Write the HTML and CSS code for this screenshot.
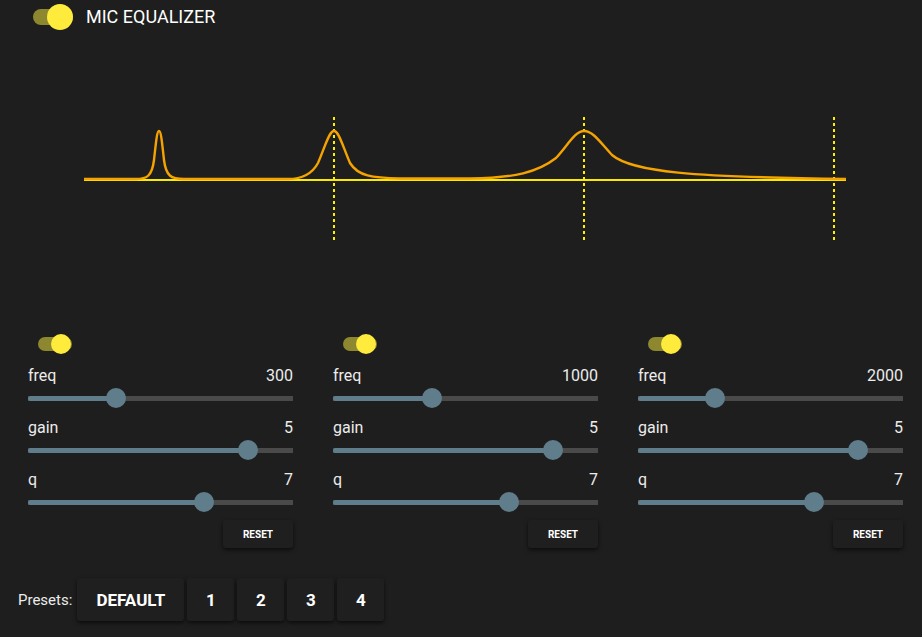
FILE: index.html
```html
<!DOCTYPE html>
<html>
    <head>
        <meta charset="UTF-8">
        <title>Mic Equalizer</title>
        <link rel="stylesheet" href="styles.css">
    </head>
    <body>
        <div class="header">
            <div class="switch big"><span class="knob"></span></div>
            <span class="title">MIC EQUALIZER</span>
        </div>

        <svg class="graph" width="922" height="280" viewBox="0 40 922 280">
            <line x1="334" y1="117" x2="334" y2="242" class="marker"/>
            <line x1="584" y1="117" x2="584" y2="242" class="marker"/>
            <line x1="834" y1="117" x2="834" y2="242" class="marker"/>
            <line x1="84" y1="180" x2="846" y2="180" class="zero"/>
            <path class="curve" d="M84 179 L136 179 C147 179, 152 176, 154 160 C156 142, 157 131, 159 131 C161 131, 162 142, 164 160 C166 176, 171 179, 184 179 L288 179 C300 179, 311 176, 318 163 C325 147, 329 131, 334 131 C339 131, 343 147, 350 163 C358 176, 372 178, 400 178.5 L470 178.5 C515 178, 538 172, 556 158 C568 145, 575 131, 584 131 C593 131, 600 142, 612 155 C632 172, 690 177, 846 179"/>
        </svg>

        <div class="bands">
            <div class="band">
                <div class="switch"><span class="knob"></span></div>
                <div class="row"><span>freq</span><span>300</span></div>
                <div class="slider"><div class="fill" style="width: 33.2%"></div><div class="thumb" style="left: 33.2%"></div></div>
                <div class="row"><span>gain</span><span>5</span></div>
                <div class="slider"><div class="fill" style="width: 83%"></div><div class="thumb" style="left: 83%"></div></div>
                <div class="row"><span>q</span><span>7</span></div>
                <div class="slider"><div class="fill" style="width: 66.4%"></div><div class="thumb" style="left: 66.4%"></div></div>
                <button class="reset">RESET</button>
            </div>
            <div class="band">
                <div class="switch"><span class="knob"></span></div>
                <div class="row"><span>freq</span><span>1000</span></div>
                <div class="slider"><div class="fill" style="width: 37.4%"></div><div class="thumb" style="left: 37.4%"></div></div>
                <div class="row"><span>gain</span><span>5</span></div>
                <div class="slider"><div class="fill" style="width: 83%"></div><div class="thumb" style="left: 83%"></div></div>
                <div class="row"><span>q</span><span>7</span></div>
                <div class="slider"><div class="fill" style="width: 66.4%"></div><div class="thumb" style="left: 66.4%"></div></div>
                <button class="reset">RESET</button>
            </div>
            <div class="band">
                <div class="switch"><span class="knob"></span></div>
                <div class="row"><span>freq</span><span>2000</span></div>
                <div class="slider"><div class="fill" style="width: 29%"></div><div class="thumb" style="left: 29%"></div></div>
                <div class="row"><span>gain</span><span>5</span></div>
                <div class="slider"><div class="fill" style="width: 83%"></div><div class="thumb" style="left: 83%"></div></div>
                <div class="row"><span>q</span><span>7</span></div>
                <div class="slider"><div class="fill" style="width: 66.4%"></div><div class="thumb" style="left: 66.4%"></div></div>
                <button class="reset">RESET</button>
            </div>
        </div>

        <div class="presets">
            <span class="presets-label">Presets:</span>
            <button class="preset wide">DEFAULT</button>
            <button class="preset">1</button>
            <button class="preset">2</button>
            <button class="preset">3</button>
            <button class="preset">4</button>
        </div>
    </body>
</html>
```

FILE: styles.css
```css
body {
    margin: 0;
    background-color: #1e1e1e;
    color: #ececec;
    font-family: Roboto, "Liberation Sans", sans-serif;
    width: 922px;
    height: 637px;
    overflow: hidden;
}
.header {
    display: flex;
    align-items: center;
    height: 33px;
    padding-left: 33px;
}
.title {
    font-size: 18px;
    color: #ffffff;
    margin-left: 13px;
}
.switch {
    position: relative;
    width: 34px;
    height: 14px;
    border-radius: 7px;
    background-color: #8d8830;
    margin-left: 10px;
    margin-top: 3px;
    margin-bottom: 3px;
}
.switch .knob {
    position: absolute;
    right: 1px;
    top: -3px;
    width: 20px;
    height: 20px;
    border-radius: 50%;
    background-color: #ffeb3b;
}
.switch.big {
    width: 40px;
    height: 16px;
    border-radius: 8px;
    margin: 0;
}
.switch.big .knob {
    width: 26px;
    height: 26px;
    right: 0;
    top: -5px;
}
.graph {
    display: block;
    margin-top: 7px;
}
.marker {
    stroke: #ffee00;
    stroke-width: 2;
    stroke-dasharray: 3 3;
}
.zero {
    stroke: #f8ea00;
    stroke-width: 2;
}
.curve {
    fill: none;
    stroke: #f5a300;
    stroke-width: 2.4;
}
.bands {
    display: grid;
    grid-template-columns: 265px 265px 265px;
    column-gap: 40px;
    margin-left: 28px;
    margin-top: 14px;
}
.band {
    display: flex;
    flex-direction: column;
}
.row {
    display: flex;
    justify-content: space-between;
    font-size: 16px;
    line-height: 20px;
    margin-top: 12px;
}
.slider + .row {
    margin-top: 8px;
}
.slider {
    position: relative;
    height: 24px;
    display: flex;
    align-items: center;
    background: linear-gradient(#4a4a4a, #4a4a4a) no-repeat center / 100% 5px;
    border-radius: 3px;
}
.slider .fill {
    height: 5px;
    border-radius: 3px;
    background-color: #607d8b;
}
.slider .thumb {
    position: absolute;
    top: 2px;
    width: 20px;
    height: 20px;
    margin-left: -10px;
    border-radius: 50%;
    background-color: #607d8b;
}
.reset {
    align-self: flex-end;
    margin-top: 6px;
    width: 70px;
    height: 28px;
    border: none;
    border-radius: 3px;
    background-color: #1f1f1f;
    color: #ffffff;
    font-family: Roboto, "Liberation Sans", sans-serif;
    font-size: 10px;
    font-weight: bold;
    box-shadow: 0px 2px 4px rgba(0, 0, 0, 0.6);
}
.presets {
    display: flex;
    align-items: center;
    gap: 3px;
    margin-top: 30px;
    padding-left: 18px;
}
.presets-label {
    font-size: 15px;
    margin-right: 2px;
}
.preset {
    width: 47px;
    height: 43px;
    border: none;
    border-radius: 3px;
    background-color: #1f1f1f;
    color: #ffffff;
    font-family: Roboto, "Liberation Sans", sans-serif;
    font-size: 17px;
    font-weight: bold;
    box-shadow: 0px 2px 4px rgba(0, 0, 0, 0.6);
}
.preset.wide {
    width: 107px;
}
```
